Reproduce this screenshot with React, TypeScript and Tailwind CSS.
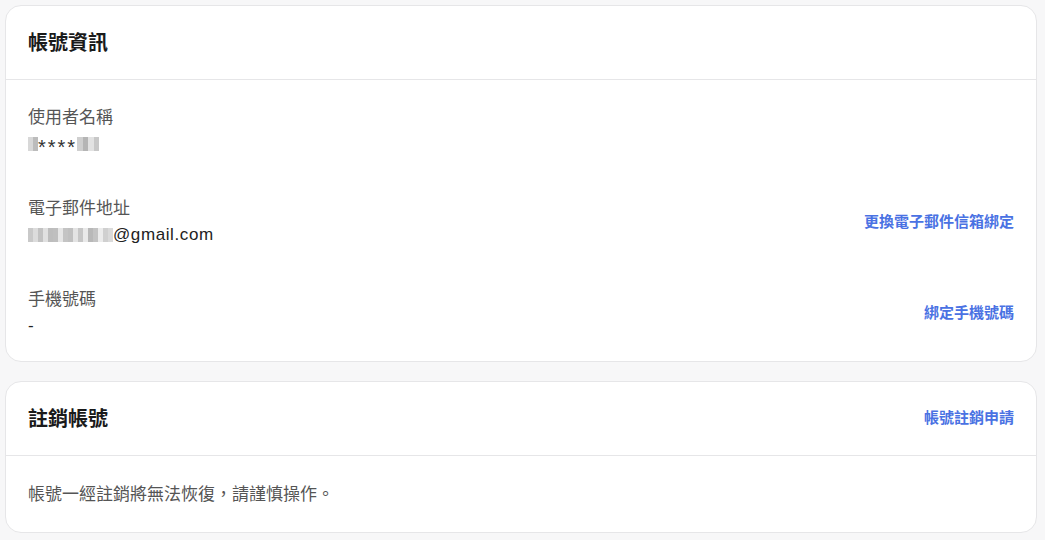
const FONT = {
  fontFamily: '"Liberation Sans", "Noto Sans CJK TC", sans-serif',
};

function Blur({ shades, w = 5 }: { shades: string[]; w?: number }) {
  return (
    <span className="inline-flex items-center h-[16px]">
      {shades.map((c, i) => (
        <span key={i} className="inline-block h-[14px]" style={{ backgroundColor: c, width: w }} />
      ))}
    </span>
  );
}

function InfoRow({
  label,
  value,
  action,
}: {
  label: string;
  value: React.ReactNode;
  action?: string;
}) {
  return (
    <div className="flex items-center justify-between">
      <div className="flex flex-col text-[17px] leading-[26px]">
        <span className="h-[26px] text-[#555]">{label}</span>
        <span className="h-[26px] flex items-center text-[#222]">{value}</span>
      </div>
      {action && (
        <a className="text-[15px] font-semibold text-[#4a72e3] cursor-pointer">{action}</a>
      )}
    </div>
  );
}

export default function App() {
  return (
    <div className="min-h-screen bg-[#f7f7f8] pt-[5px] pl-[5px] pr-[8px] pb-[6px]" style={FONT}>
      <div className="bg-white rounded-2xl border border-[#e6e6e8]">
        <div className="h-[74px] px-[22px] flex items-center border-b border-[#e6e6e8]">
          <h2 className="text-[20px] font-bold text-[#1a1a1a]">帳號資訊</h2>
        </div>
        <div className="px-[22px] pt-[25px] pb-[22px] flex flex-col gap-[39px]">
          <InfoRow
            label="使用者名稱"
            value={
              <>
                <Blur shades={["#d8d8d8", "#bcbcbc"]} />
                <span className="text-[20px] leading-none tracking-[2px] translate-y-[3px] text-[#333]">****</span>
                <Blur w={5.5} shades={["#cfcfcf", "#b5b5b5", "#e2e2e2", "#c8c8c8"]} />
              </>
            }
          />
          <InfoRow
            label="電子郵件地址"
            value={
              <>
                <Blur
                  shades={[
                    "#c9c9c9", "#dcdcdc", "#c2c2c2", "#e0e0e0", "#bdbdbd", "#bfbfbf", "#e6e6e6",
                    "#c4c4c4", "#c0c0c0", "#e3e3e3", "#c6c6c6", "#e9e9e9", "#b8b8b8", "#c3c3c3",
                    "#ececec", "#d0d0d0", "#dadada",
                  ]}
                />
                <span className="tracking-[0.6px]">@gmail.com</span>
              </>
            }
            action="更換電子郵件信箱綁定"
          />
          <InfoRow label="手機號碼" value="-" action="綁定手機號碼" />
        </div>
      </div>

      <div className="mt-[19px] bg-white rounded-2xl border border-[#e6e6e8]">
        <div className="h-[74px] px-[22px] flex items-center justify-between border-b border-[#e6e6e8]">
          <h2 className="text-[20px] font-bold text-[#1a1a1a]">註銷帳號</h2>
          <a className="text-[15px] font-semibold text-[#4a72e3] cursor-pointer">帳號註銷申請</a>
        </div>
        <div className="px-[22px] pt-[26px] pb-[24px]">
          <p className="text-[17px] leading-[26px] text-[#555]">帳號一經註銷將無法恢復，請謹慎操作。</p>
        </div>
      </div>
    </div>
  );
}
